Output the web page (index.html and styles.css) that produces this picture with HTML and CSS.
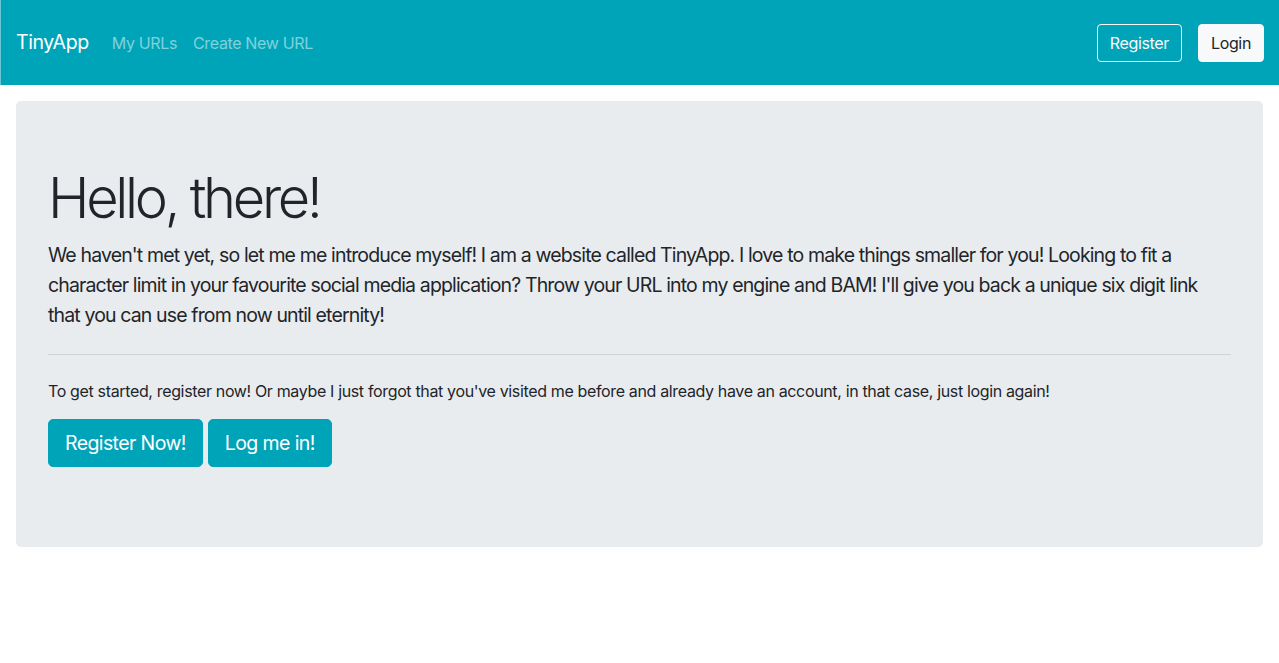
FILE: index.html
```html
<!DOCTYPE html>
<html lang="en">
<head>
<meta charset="utf-8">
<title>TinyApp</title>
<link rel="stylesheet" href="styles.css">
</head>
<body>
<nav class="navbar">
  <a class="brand" href="#">TinyApp</a>
  <ul class="nav-links">
    <li><a class="nav-link" href="#">My URLs</a></li>
    <li><a class="nav-link" href="#">Create New URL</a></li>
  </ul>
  <div class="nav-actions">
    <a class="btn btn-outline-light" href="#">Register</a>
    <a class="btn btn-light" href="#">Login</a>
  </div>
</nav>
<main class="jumbotron">
  <h1 class="display">Hello, there!</h1>
  <p class="lead">We haven't met yet, so let me me introduce myself! I am a website called TinyApp. I love to make things smaller for you! Looking to fit a character limit in your favourite social media application? Throw your URL into my engine and BAM! I'll give you back a unique six digit link that you can use from now until eternity!</p>
  <hr class="divider">
  <p class="note">To get started, register now! Or maybe I just forgot that you've visited me before and already have an account, in that case, just login again!</p>
  <p class="actions">
    <a class="btn btn-info btn-lg" href="#">Register Now!</a>
    <a class="btn btn-info btn-lg" href="#">Log me in!</a>
  </p>
</main>
</body>
</html>
```
FILE: styles.css
```css
* { box-sizing: border-box; }
html, body { margin: 0; padding: 0; }
body {
  font-family: Inter, "Noto Sans", "Liberation Sans", sans-serif;
  font-size: 16px;
  line-height: 1.5;
  color: #212529;
  background: #fff;
  letter-spacing: -0.35px;
}
a { text-decoration: none; }

.navbar {
  display: flex;
  align-items: center;
  height: 85px;
  padding: 0 16px;
  background: #00a4b8;
  border-left: 1px solid #6cc6d1;
}
.brand {
  color: #fff;
  font-size: 19.5px;
  margin-right: 15px;
  margin-left: -1px;
  padding-top: 1px;
  letter-spacing: -0.4px;
}
.nav-links {
  display: flex;
  list-style: none;
  margin: 0;
  padding: 1px 0 0;
  flex: 1;
}
.nav-link {
  display: block;
  padding: 8px;
  color: rgba(255, 255, 255, 0.5);
}
.nav-actions {
  display: flex;
  gap: 16px;
  margin-right: -1px;
}
.btn {
  display: inline-block;
  padding: 6px 12px;
  font-size: 16px;
  line-height: 24px;
  border: 1px solid transparent;
  border-radius: 4px;
  text-align: center;
}
.btn-outline-light { color: #f8f9fa; border-color: #f8f9fa; }
.btn-light { color: #212529; background: #f8f9fa; border-color: #f8f9fa; }

.jumbotron {
  display: block;
  margin: 16px 16px 32px;
  padding: 64px 32px;
  background: #e9ecef;
  border-radius: 5px;
}
.display {
  margin: 0 0 8px;
  font-size: 56px;
  font-weight: 300;
  line-height: 1.2;
  letter-spacing: -3.3px;
}
.lead {
  margin: 0 0 16px;
  font-size: 19.5px;
  font-weight: 400;
  line-height: 30px;
  letter-spacing: -0.86px;
}
.divider {
  margin: 24px 0;
  border: 0;
  border-top: 1px solid rgba(0, 0, 0, 0.1);
}
.note { margin: 0 0 16px; font-size: 16px; }
.actions { margin: 0 0 16px; display: flex; gap: 5px; }
.btn-info { color: #fff; background: #00a4b8; border-color: #00a4b8; }
.btn-lg {
  padding: 8px 16px;
  font-size: 19.5px;
  line-height: 30px;
  border-radius: 5px;
  letter-spacing: -0.6px;
}
```
